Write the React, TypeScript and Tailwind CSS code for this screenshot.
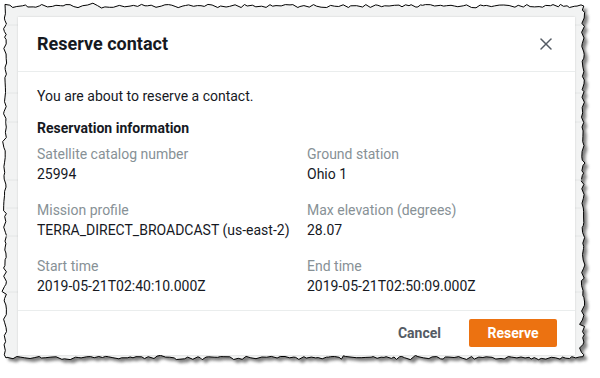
import { X } from "lucide-react";

// seeded jitter so the torn edge is stable between renders
function rng(seed: number) {
  let s = seed;
  return () => {
    s = (s * 16807) % 2147483647;
    return (s - 1) / 2147483646;
  };
}

function tornPath(x0: number, y0: number, x1: number, y1: number) {
  const r = rng(42);
  const pts: [number, number][] = [];
  const j = () => (r() - 0.5) * 3.2 + (r() < 0.12 ? (r() - 0.5) * 4 : 0);
  for (let x = x0; x < x1; x += 2 + r() * 4) pts.push([x, y0 + j()]);
  for (let y = y0; y < y1; y += 2 + r() * 4) pts.push([x1 + j(), y]);
  for (let x = x1; x > x0; x -= 2 + r() * 4) pts.push([x, y1 + j()]);
  for (let y = y1; y > y0; y -= 2 + r() * 4) pts.push([x0 + j(), y]);
  return "M" + pts.map((p) => `${p[0].toFixed(1)},${p[1].toFixed(1)}`).join("L") + "Z";
}

const FRAME = tornPath(5, 6, 583, 358);

const fields = [
  ["Satellite catalog number", "25994"],
  ["Ground station", "Ohio 1"],
  ["Mission profile", "TERRA_DIRECT_BROADCAST (us-east-2)"],
  ["Max elevation (degrees)", "28.07"],
  ["Start time", "2019-05-21T02:40:10.000Z"],
  ["End time", "2019-05-21T02:50:09.000Z"],
];

function Frame() {
  return (
    <svg className="absolute inset-0" width={600} height={378}>
      <defs>
        <filter id="blur" x="-5%" y="-5%" width="110%" height="110%">
          <feGaussianBlur stdDeviation="1.6" />
        </filter>
      </defs>
      <path d={FRAME} transform="translate(3.5,3.5)" fill="#555" opacity={0.75} filter="url(#blur)" />
      <path d={FRAME} fill="#f2f3f3" stroke="#000" strokeWidth={1} />
      {[25, 93, 122, 180, 208, 236, 292].map((y) => (
        <line key={y} x1={6} x2={582} y1={y} y2={y} stroke="#e4e6e6" strokeWidth={1} />
      ))}
    </svg>
  );
}

export default function App() {
  return (
    <div className="relative w-[600px] h-[378px] overflow-hidden bg-white font-['Roboto',sans-serif] text-[14px] text-[#16191f]">
      <Frame />
      <div className="relative pl-[18px] pt-[17px]">
        <div className="flex h-[338px] w-[557px] flex-col bg-white shadow-[0_0_2px_rgba(0,0,0,0.15)]">
          <div className="flex h-[55px] items-center justify-between border-b border-[#eaeded] pl-[19px] pr-[19px]">
            <h2 className="text-[18px] font-bold leading-none">Reserve contact</h2>
            <X size={20} strokeWidth={1.8} className="text-[#545b64]" />
          </div>
          <div className="flex-1 px-[19px] pt-[14px]">
            <p className="leading-[20px]">You are about to reserve a contact.</p>
            <h3 className="mt-[12px] font-bold leading-[20px]">Reservation information</h3>
            <div className="mt-[6px] grid grid-cols-[270px_1fr] gap-y-[16px]">
              {fields.map(([label, value]) => (
                <div key={label} className="leading-[20px]">
                  <div className="text-[#879196]">{label}</div>
                  <div>{value}</div>
                </div>
              ))}
            </div>
          </div>
          <div className="flex h-[45px] items-center justify-end gap-[28px] border-t border-[#eaeded] pr-[18px]">
            <button className="font-bold text-[#545b64]">Cancel</button>
            <button className="h-[28px] w-[88px] rounded-[2px] bg-[#ec7211] font-bold text-white">Reserve</button>
          </div>
        </div>
      </div>
    </div>
  );
}
